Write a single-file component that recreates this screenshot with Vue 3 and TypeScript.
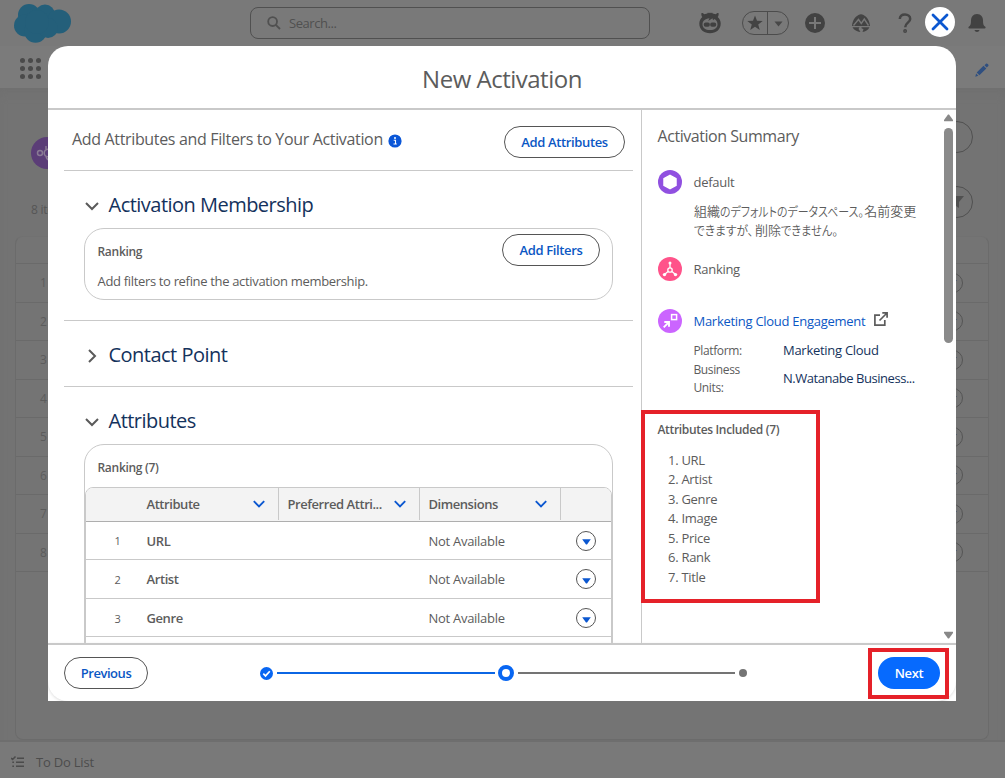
<script setup lang="ts">
interface AttributeRow {
  index: number
  name: string
  dimension: string
}

const attributes: string[] = ['URL', 'Artist', 'Genre', 'Image', 'Price', 'Rank', 'Title']
const rows: AttributeRow[] = attributes.slice(0, 3).map((name, i) => ({
  index: i + 1,
  name,
  dimension: 'Not Available',
}))
const pageRows: number[] = [1, 2, 3, 4, 5, 6, 7, 8]
const dots: number[] = [0, 1, 2, 3, 4, 5, 6, 7, 8]
</script>

<template>
  <div class="screen">
    <div class="page">
      <header class="global">
        <svg class="cloud" width="60" height="42" viewBox="0 0 60 42">
          <g fill="#245f7a">
            <circle cx="16" cy="13" r="11" /><circle cx="32" cy="12.500" r="10" /><circle cx="46" cy="19.500" r="12" />
            <circle cx="12" cy="23.500" r="11" /><circle cx="22.500" cy="29.500" r="11.200" /><circle cx="35" cy="26" r="10" />
            <circle cx="24" cy="20" r="12" />
          </g>
        </svg>
        <div class="search">
          <svg width="14" height="14" viewBox="0 0 14 14" fill="none" stroke="#505050" stroke-width="1.800">
            <circle cx="5.600" cy="5.600" r="4.400" /><path d="M8.800 8.800L13 13" />
          </svg>
          <span class="search-text">Search...</span>
        </div>
        <div class="tools">
          <svg class="astro" width="24" height="24" viewBox="0 0 24 24">
            <path d="M3.500 2c1.300-.2 2 .5 2.800 1.300l3-.8.7-1 1 .8 1-.8 1 .8 1-.8.700 1 3 .8c.8-.8 1.500-1.500 2.800-1.300.4 1.600 0 3-.8 4 2 1.800 3 4.200 3 6.500 0 6-4.700 9.800-10.700 9.800S1.300 18.500 1.300 12.500c0-2.300 1-4.700 3-6.500-.8-1-1.200-2.400-.8-4z" fill="#404040" />
            <path d="M4.500 13.500c0-3.500 2.500-5.700 7-6.200l-1.300 2.700 4.300-2.700.500 2 1.500-1.300c2 1 3 3 3 5.500 0 3.500-3 5.500-7.500 5.500s-7.500-2-7.500-5.500z" fill="#757575" />
            <rect x="5.800" y="11.500" width="6" height="4.200" rx="1.800" fill="#404040" /><rect x="12.200" y="11.500" width="6" height="4.200" rx="1.800" fill="#404040" />
          </svg>
          <div class="favorites">
            <span class="star">
              <svg width="16" height="16" viewBox="0 0 16 16"><path d="M8 .5l2 5.300 5.700.2-4.500 3.500 1.600 5.500L8 11.800 3.200 15l1.600-5.500L.3 6l5.700-.2z" fill="#434343" /></svg>
            </span>
            <span class="caret"><svg width="9" height="6" viewBox="0 0 9 6"><path d="M.5.5h8L4.500 5.500z" fill="#484848" /></svg></span>
          </div>
          <svg class="plus" width="20" height="20" viewBox="0 0 20 20"><circle cx="10" cy="10" r="10" fill="#424242" /><path d="M10 4v12M4 10h12" stroke="#787878" stroke-width="2" /></svg>
          <svg class="trail" width="20" height="20" viewBox="0 0 20 20">
            <path d="M1 13C1.500 7 4.500 3.500 7.500 2 9 1 11 1 12.500 2c3 1.500 6 5 6.500 11z" fill="#444" />
            <path d="M2.500 12.500L7.500 6.500l2.800 4 3-4.500L17.500 12.500" fill="none" stroke="#777" stroke-width="1.400" />
            <path d="M1.500 14.300h7l-1 1.700 2 3C6 18.500 3 17.500 1.500 14.300zM10.500 14.300h8c-1.500 3-4 4.200-7 4.700l1-2.700-2-1z" fill="#444" />
          </svg>
          <svg class="help" width="14" height="20" viewBox="0 0 14 20" fill="none" stroke="#454545" stroke-width="2.500"><path d="M1.800 6C2 3 4 1.600 7 1.600S12.200 3.400 12.200 6c0 3.600-5 3.800-5 8.200" /><circle cx="7.100" cy="18" r=".7" /></svg>
          <svg class="bell" width="20" height="20" viewBox="0 0 20 20" fill="#424242"><path d="M10 1c4 0 6 3 6 6.500 0 3.500.5 5 2 6 .8.600 1 2-.500 2h-15c-1.500 0-1.300-1.400-.500-2 1.500-1 2-2.500 2-6C4 4 6 1 10 1zM7.500 17h5c-.500 2.500-4.500 2.500-5 0z" /></svg>
        </div>
      </header>
      <nav class="nav">
        <div class="dots"><i v-for="d in dots" :key="d"></i></div>
        <svg width="14" height="14" viewBox="0 0 14 14" fill="#2f4f80"><path d="M9.500 2.200l1.500-1.500c.6-.5 1.200-.3 1.700.2l.5.600c.5.500.5 1 .1 1.400L11.700 4.500zM8.500 2.800L11.300 5.500 4.400 12.200 1.700 9.500zM1.100 10.600l2.200 2.200L.3 13.700z" /></svg>
      </nav>
      <main class="content">
        <div class="title-row">
          <span class="entity"><svg width="18" height="18" viewBox="0 0 18 18" fill="none" stroke="#8a7a94" stroke-width="1.500"><circle cx="4" cy="9" r="2.500" /><circle cx="12" cy="9" r="3.800" /><path d="M10 5V2m0 11l2 3" /></svg></span>
          <span class="pill"></span>
        </div>
        <div class="sub-row">
          <span class="count">8 items</span>
          <span class="pill filter"><svg width="13" height="12" viewBox="0 0 13 12"><path d="M0 0h13L8 6v6L5 10V6z" fill="#505050" /></svg></span>
        </div>
        <div class="list">
          <div class="list-head"></div>
          <div v-for="n in pageRows" :key="n" class="list-row">
            <span>{{ n }}</span>
            <b><svg width="8" height="5" viewBox="0 0 8 5"><path d="M0 0h8L4 4.500z" fill="#3b4c65" /></svg></b>
          </div>
        </div>
      </main>
      <footer class="utility">
        <svg width="13" height="12" viewBox="0 0 13 12" fill="none" stroke="#4b4b4b" stroke-width="1.500"><path d="M0 2l1.600 1.500L4.500.5M6 2.200h7M5 6.200h8M5 10.300h8M1.300 6.200h1.700M1.300 10.300h1.700" /></svg>
        <span>To Do List</span>
      </footer>
    </div>

    <button class="close" aria-label="Close">
      <svg width="18" height="18" viewBox="0 0 18 18" fill="none" stroke="#0b57d0" stroke-width="2.800" stroke-linecap="round"><path d="M2 2l14 14M16 2L2 16" /></svg>
    </button>

    <section class="modal">
      <h1 class="modal-title">New Activation</h1>
      <div class="body">
        <div class="left">
          <div class="intro">
            <span class="intro-text">Add Attributes and Filters to Your Activation</span>
            <svg class="info" width="14" height="14" viewBox="0 0 14 14"><circle cx="7" cy="7" r="6.600" fill="#0b57d8" /><circle cx="7" cy="4" r="1" fill="#fff" /><path d="M5.700 6.200H7.500V10M5.500 10h3.300" stroke="#fff" stroke-width="1.100" fill="none" /></svg>
            <button class="btn attr-btn">Add Attributes</button>
          </div>
          <div class="section membership">
            <h2><svg width="14" height="14" viewBox="0 0 14 14"><path d="M1 4l6 6 6-6" /></svg><span>Activation Membership</span></h2>
            <div class="card">
              <div class="card-head"><strong class="small">Ranking</strong><button class="btn filt-btn">Add Filters</button></div>
              <p>Add filters to refine the activation membership.</p>
            </div>
          </div>
          <div class="section contact">
            <h2><svg width="14" height="14" viewBox="0 0 14 14"><path d="M4 1l6 6-6 6" /></svg><span>Contact Point</span></h2>
          </div>
          <div class="attributes">
            <h2><svg width="14" height="14" viewBox="0 0 14 14"><path d="M1 4l6 6 6-6" /></svg><span>Attributes</span></h2>
            <div class="table-card">
              <strong class="small table-name">Ranking (7)</strong>
              <div class="table">
                <div class="thead">
                  <div class="th c1"><span>Attribute</span><svg width="12" height="8" viewBox="0 0 12 8"><path d="M.8 1.200l5.200 5.200 5.200-5.200" /></svg></div>
                  <div class="th c2"><span>Preferred Attri...</span><svg width="12" height="8" viewBox="0 0 12 8"><path d="M.8 1.200l5.200 5.200 5.200-5.200" /></svg></div>
                  <div class="th c3"><span>Dimensions</span><svg width="12" height="8" viewBox="0 0 12 8"><path d="M.8 1.200l5.200 5.200 5.200-5.200" /></svg></div>
                </div>
                <div v-for="r in rows" :key="r.index" class="tr">
                  <span class="num">{{ r.index }}</span>
                  <strong class="name">{{ r.name }}</strong>
                  <span class="dim">{{ r.dimension }}</span>
                  <span class="menu"><svg width="9" height="6" viewBox="0 0 9 6"><path d="M.2.3h8.600L5 5.600H4z" fill="#0b57d0" /></svg></span>
                </div>
              </div>
            </div>
          </div>
        </div>

        <aside class="right">
          <div class="summary">
            <h3>Activation Summary</h3>
            <div class="item">
              <svg width="24" height="24" viewBox="0 0 24 24"><circle cx="12" cy="12" r="12" fill="#9050e0" /><path d="M12 5.300l6 3.300v6.800l-6 3.300-6-3.300V8.600z" fill="#fff" stroke="#fff" stroke-linejoin="round" stroke-width="1.500" /></svg>
              <span>default</span>
            </div>
            <p class="jp">組織<span class="kana k1">のデフォルトのデータスペース。</span>名前変更<br /><span class="kana k2">できますが、</span>削除<span class="kana k3">できません。</span></p>
            <div class="item">
              <svg width="24" height="24" viewBox="0 0 24 24"><circle cx="12" cy="12" r="12" fill="#ff538a" /><g fill="none" stroke="#fff" stroke-width="1.300"><circle cx="12" cy="13" r="2.200" /><path d="M12 6v5M10 14.500L6.500 17.500M14 14.500L17.500 17.500" /></g><g fill="#fff"><circle cx="12" cy="6" r="1.500" /><circle cx="6.500" cy="17.600" r="1.700" /><circle cx="17.500" cy="17.600" r="1.700" /></g></svg>
              <span>Ranking</span>
            </div>
            <div class="item engagement">
              <svg width="24" height="24" viewBox="0 0 24 24"><circle cx="12" cy="12" r="12" fill="#cb65ff" /><g fill="none" stroke="#fff" stroke-width="1.500"><rect x="13.600" y="5.600" width="5" height="5" /><path d="M5.700 18.300l5-5" stroke-width="1.900" /><path d="M6.300 13h4.700v4.700" stroke-width="1.900" /></g></svg>
              <a>Marketing Cloud Engagement</a>
              <svg class="ext" width="14" height="14" viewBox="0 0 14 14" fill="none" stroke="#5c5c5c" stroke-width="1.700"><path d="M6 3.200H.9v9.900h9.900V8M8.300.9h4.800v4.800M13 1L5.500 8.500" /></svg>
            </div>
            <dl>
              <dt>Platform:</dt><dd>Marketing Cloud</dd>
              <dt class="bu">Business<br />Units:</dt><dd class="bu unit">N.Watanabe Business...</dd>
            </dl>
            <h4 class="small">Attributes Included (7)</h4>
            <ol><li v-for="(a, i) in attributes" :key="a">{{ i + 1 }}. {{ a }}</li></ol>
          </div>
          <div class="scroll">
            <svg width="9" height="8" viewBox="0 0 9 8"><path d="M4 .5h1L9 6c.3.700 0 1.200-.6 1.200H.6C0 7.200-.3 6.700 0 6z" fill="#888" /></svg>
            <span class="thumb"></span>
            <svg class="down" width="9" height="8" viewBox="0 0 9 8"><path d="M4 7.500h1L9 2c.3-.7 0-1.200-.6-1.200H.6C0 .8-.3 1.300 0 2z" fill="#888" /></svg>
          </div>
        </aside>
      </div>
      <div class="foot">
        <button class="btn prev">Previous</button>
        <div class="progress">
          <svg width="13" height="13" viewBox="0 0 13 13"><circle cx="6.500" cy="6.500" r="6.500" fill="#0866f2" /><path d="M3.300 6.700l2.200 2.200 4.300-4.700" fill="none" stroke="#fff" stroke-width="1.700" /></svg>
          <span class="bar done"></span>
          <span class="current"></span>
          <span class="bar"></span>
          <span class="pending"></span>
        </div>
        <button class="next">Next</button>
      </div>
    </section>
    <div class="mark mark-list"></div>
    <div class="mark mark-next"></div>
  </div>
</template>

<style>
body { margin: 0; }
</style>

<style scoped>
* { box-sizing: border-box; }
.screen { position: relative; width: 1005px; height: 778px; overflow: hidden; font-family: "Open Sans", "Noto Sans CJK JP", sans-serif; font-size: 13px; letter-spacing: -0.28px; color: #5c5c5c; }
h1, h2, h3, h4, p, dl, dd, ol { margin: 0; padding: 0; font-weight: 400; }
svg { display: block; flex: none; }
button { font: inherit; letter-spacing: inherit; padding: 0; }
span, strong, a, li, p, dd { white-space: nowrap; }
.page { display: flex; flex-direction: column; height: 778px; background: #747474; }
.global { display: flex; height: 46px; flex: none; background: #797979; }
.cloud { margin: 2px 0 0 13px; }
.search { display: flex; align-items: center; width: 400px; height: 32px; margin: 7px 0 0 177px; padding-left: 16px; border: 1px solid #505050; border-radius: 8px; color: #505050; gap: 8px; letter-spacing: -0.45px; }
.tools { display: flex; align-items: center; height: 46px; }
.astro { margin-left: 48px; }
.favorites { display: flex; width: 47px; height: 24px; margin-left: 20px; border: 1px solid #4c4c4c; border-radius: 12px; }
.star { display: flex; align-items: center; justify-content: center; width: 25px; border-right: 1px solid #4c4c4c; }
.caret { display: flex; align-items: center; justify-content: center; width: 20px; padding-top: 2px; }
.plus { margin-left: 16px; }
.trail { margin-left: 26px; }
.help { margin-left: 27px; }
.bell { margin-left: 55px; }
.nav { display: flex; justify-content: space-between; height: 42px; flex: none; padding: 12px 16px 0 20px; background: #7b7b7b; }
.nav > svg { margin-top: 5px; }
.dots { display: grid; grid-template-columns: repeat(3, 5px); gap: 3px; align-content: start; }
.dots i { width: 5px; height: 5px; border-radius: 50%; background: #4a4a4a; }
.content { flex: 1; padding: 31px 16px 0 15px; background: #737373; box-shadow: inset 0 8px 14px -8px #6e6e6e; }
.title-row { display: flex; justify-content: space-between; height: 67px; padding-left: 16px; }
.entity { display: flex; align-items: center; width: 32px; height: 32px; padding-left: 5px; margin-top: 18px; border-radius: 50%; background: #5b3d77; }
.pill { width: 32px; height: 32px; margin: 2px 16px 0 0; border: 1px solid #505050; border-radius: 50%; }
.sub-row { display: flex; justify-content: space-between; height: 50px; padding-left: 16px; }
.count { margin-top: 15px; font-size: 12px; color: #565656; }
.pill.filter { display: flex; align-items: center; justify-content: center; margin-top: 0; }
.list { height: 504px; border: 1px solid #6b6b6b; border-top-color: #717171; border-radius: 8px; background: #747474; }
.list-head { height: 27px; border-bottom: 1px solid #6a6a6a; }
.list-row { display: flex; justify-content: space-between; align-items: center; height: 38.500px; padding: 0 25px 0 24px; border-bottom: 1px solid #6a6a6a; font-size: 12px; color: #5c5c5c; }
.list-row b { display: flex; align-items: center; justify-content: center; width: 20px; height: 20px; border: 1px solid #545454; border-radius: 50%; }
.utility { display: flex; align-items: center; gap: 12px; height: 38px; flex: none; padding: 4px 0 0 11px; border-top: 2px solid #6e6e6e; background: #797979; color: #4c4c4c; letter-spacing: -0.2px; }
.close { position: absolute; left: 925px; top: 7px; width: 30px; height: 30px; display: flex; align-items: center; justify-content: center; border: 0; border-radius: 50%; background: #fff; }
.modal { position: absolute; left: 48px; top: 46px; width: 908px; height: 655px; display: flex; flex-direction: column; border-radius: 20px 20px 0 0; background: #fff; overflow: hidden; }
.modal-title { height: 64px; flex: none; border-bottom: 2px solid #c9c9c9; font-size: 24px; letter-spacing: -0.5px; line-height: 65px; text-align: center; }
.body { display: flex; height: 533px; flex: none; overflow: hidden; }
.left { width: 593px; padding: 0 8px 0 16px; overflow: hidden; }
.intro { display: flex; height: 61px; padding: 16px 8px 0; border-bottom: 1px solid #c9c9c9; }
.intro-text { width: 310px; font-size: 16px; line-height: 26px; letter-spacing: -0.34px; }
.info { margin: 8px 0 0 6px; }
.btn { display: flex; align-items: center; justify-content: center; height: 32px; border: 1px solid #555; border-radius: 16px; background: #fff; color: #0b57c4; font-weight: 600; letter-spacing: -0.36px; }
.attr-btn { width: 121px; margin-left: auto; }
.section { border-bottom: 1px solid #c9c9c9; }
h2 { display: flex; align-items: center; gap: 9.500px; height: 32px; padding-left: 21px; font-size: 20px; letter-spacing: -0.52px; color: #14325c; }
h2 svg { margin-top: 2px; }
h2 span { margin-top: -2px; }
h2 path { fill: none; stroke: #5a5a5a; stroke-width: 2; }
.membership { height: 150px; padding-top: 18px; }
.card { width: 529px; height: 72px; margin: 7px 0 0 20px; padding: 5px 12px 0 12.500px; border: 1px solid #c9c9c9; border-radius: 20px; }
.card-head { display: flex; align-items: center; justify-content: space-between; }
.card-head strong { padding-top: 2px; }
strong { font-weight: 600; letter-spacing: -0.4px; }
.small { font-size: 12px; letter-spacing: -0.29px; }
.filt-btn { width: 98px; }
.card p { line-height: 30px; letter-spacing: -0.33px; }
.contact { height: 66px; padding-top: 18px; }
.attributes { padding-top: 18px; }
.table-card { width: 529px; height: 300px; margin: 7px 0 0 20px; border: 1px solid #c9c9c9; border-radius: 20px; }
.table-name { display: block; height: 42px; padding-left: 12.500px; line-height: 46px; }
.table { height: 300px; border: 1px solid #c9c9c9; border-radius: 8px; overflow: hidden; }
.thead { display: flex; height: 34px; background: #f3f3f3; border-bottom: 1px solid #aeaeae; }
.th { display: flex; align-items: center; justify-content: space-between; height: 32px; padding: 0 13px 0 8.500px; border-right: 1px solid #c9c9c9; font-weight: 600; letter-spacing: -0.44px; }
.th path { fill: none; stroke: #0b57d0; stroke-width: 1.900; }
.c1 { width: 193px; padding-left: 60.500px; }
.c2, .c3 { width: 141px; }
.tr { display: flex; align-items: center; height: 39px; border-bottom: 1px solid #c9c9c9; }
.tr:nth-child(2) { height: 38px; }
.tr:nth-child(4) { height: 38px; padding-top: 1px; }
.num { width: 60.500px; padding-left: 28.500px; font-size: 11px; }
.name { width: 282px; }
.dim { width: 147.500px; }
.menu { display: flex; align-items: center; justify-content: center; width: 20px; height: 20px; padding-top: 3px; border: 1px solid #555; border-radius: 50%; }
.right { display: flex; width: 315px; border-left: 1px solid #c9c9c9; }
.summary { width: 300px; padding-left: 15px; }
h3 { height: 60px; padding-left: 0.500px; font-size: 16px; line-height: 53px; letter-spacing: -0.45px; }
.item { display: flex; align-items: center; gap: 11.500px; height: 24px; padding-left: 1px; }
.jp { height: 63px; padding: 7px 0 0 37px; line-height: 19px; letter-spacing: 0; font-family: "Noto Sans CJK JP", sans-serif; font-weight: 350; }
.kana { display: inline-block; transform-origin: left; font-feature-settings: "palt"; }
.k1 { transform: scaleX(0.84); margin-right: -27px; }
.k2 { transform: scaleX(0.9); margin-right: -5px; }
.k3 { transform: scaleX(0.86); }
.engagement { margin-top: 28px; }
.item a { color: #0b57c4; }
.ext { margin: -4px 0 0 -3px; }
dl { display: grid; grid-template-columns: 89.500px 1fr; padding: 8px 0 0 36.500px; }
dt, dd { line-height: 19px; }
dt { font-size: 12px; letter-spacing: -0.38px; }
dd { color: #14325c; }
dt.bu { line-height: 18px; padding-top: 1px; }
dd.bu { padding-top: 9px; }
.bu { height: 37px; }
.unit { letter-spacing: -0.46px; }
h4 { padding: 23px 0 0 0.500px; line-height: 20px; font-weight: 600; }
h4.small { letter-spacing: -0.33px; }
ol { list-style: none; padding: 11px 0 0 11px; }
li { height: 19.450px; line-height: 19.450px; }
.scroll { display: flex; flex-direction: column; width: 9px; margin-left: 2px; padding: 4px 0 4px; }
.thumb { height: 215px; margin-top: 6px; border-radius: 5px; background: #8a8a8a; }
.down { margin-top: auto; }
.foot { display: flex; align-items: center; flex: 1; padding: 0 16px; border-top: 2px solid #c9c9c9; border-radius: 0 0 20px 20px; box-shadow: 0 1px 3px #ddd; }
.prev { width: 84px; letter-spacing: -0.45px; }
.progress { display: flex; align-items: center; margin-left: 111.500px; }
.bar { width: 217px; height: 2px; margin: 0 4px; background: #747474; }
.bar.done { width: 218px; margin: 0 3px 0 4.500px; background: #0b66e4; }
.current { width: 16px; height: 16px; border: 4px solid #0866f2; border-radius: 50%; background: #fff; }
.pending { width: 8px; height: 8px; border-radius: 50%; background: #747474; }
.next { width: 62px; height: 32px; margin-left: auto; border: 0; border-radius: 16px; background: #066afe; color: #fff; font-weight: 600; letter-spacing: -0.4px; }
.mark { position: absolute; border: 4px solid #e52129; }
.mark-list { left: 641px; top: 410px; width: 179px; height: 193px; }
.mark-next { left: 868px; top: 648px; width: 81px; height: 51px; }
</style>
